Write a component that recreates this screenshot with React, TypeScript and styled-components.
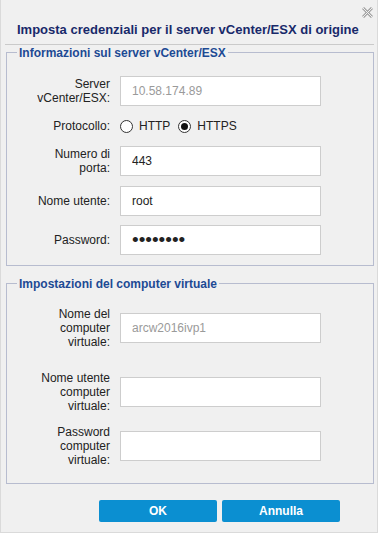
import React from "react";
import styled, { createGlobalStyle } from "styled-components";

const GlobalStyle = createGlobalStyle`
  body {
    margin: 0;
    background: #ffffff;
    font-family: "Liberation Sans", Arial, sans-serif;
  }
`;

const Dialog = styled.div`
  width: 378px;
  height: 533px;
  box-sizing: border-box;
  border: 1px solid #dadada;
  border-top: none;
  background: #f0f0f0;
  display: flex;
  flex-direction: column;
`;

const CloseRow = styled.div`
  display: flex;
  justify-content: flex-end;
  padding: 7px 4px 0 0;
  height: 12px;
`;

const CloseButton = styled.button`
  width: 11px;
  height: 11px;
  padding: 0;
  border: none;
  background: none;
  cursor: pointer;
  display: flex;
`;

const Title = styled.div`
  margin-top: 3px;
  padding-left: 16px;
  font-size: 13px;
  font-weight: bold;
  line-height: 16px;
  color: #18296a;
`;

const Separator = styled.div`
  margin: 6px 3px 0 4px;
  height: 1px;
  background: #cacaca;
`;

const Group = styled.fieldset<{ top: number; bottom: number; offset: number }>`
  margin: ${({ offset }) => offset}px 3px 0 5px;
  padding: ${({ top }) => top}px 0 ${({ bottom }) => bottom}px 0;
  border: 1px solid #b7bccf;
  min-width: 0;
`;

const Legend = styled.legend`
  margin-left: 10px;
  padding: 2px 2px 0;
  font-size: 12px;
  font-weight: bold;
  line-height: 14px;
  color: #1d4a94;
`;

const Row = styled.div<{ space?: number }>`
  display: grid;
  grid-template-columns: 103px 201px;
  column-gap: 10px;
  align-items: center;
  margin-top: ${({ space }) => space ?? 0}px;
`;

const Label = styled.label`
  text-align: right;
  font-size: 12px;
  line-height: 14px;
  color: #222222;
`;

const TextInput = styled.input<{ big?: boolean }>`
  box-sizing: border-box;
  width: 201px;
  height: 30px;
  padding: 0 11px;
  border: 1px solid #cdcdcd;
  background: #ffffff;
  font-family: "Liberation Sans", Arial, sans-serif;
  font-size: ${({ big }) => (big ? "19px" : "12px")};
  color: #222222;
  outline: none;

  &:disabled {
    color: #9a9a9a;
  }
`;

const RadioGroup = styled.div`
  display: flex;
  align-items: center;
  height: 20px;
`;

const RadioOption = styled.label`
  display: flex;
  align-items: center;
  gap: 6px;
  margin-right: 8px;
  font-size: 12px;
  color: #222222;
  cursor: pointer;
`;

const RadioDot = styled.span<{ checked: boolean }>`
  width: 13px;
  height: 13px;
  box-sizing: border-box;
  border: 1px solid #333333;
  border-radius: 50%;
  background: #ffffff;
  display: flex;
  align-items: center;
  justify-content: center;

  &::after {
    content: "";
    width: 7px;
    height: 7px;
    border-radius: 50%;
    background: ${({ checked }) => (checked ? "#111111" : "transparent")};
  }
`;

const Footer = styled.div`
  display: flex;
  justify-content: flex-end;
  gap: 5px;
  margin-top: 16px;
  padding-right: 37px;
`;

const Button = styled.button`
  width: 118px;
  height: 22px;
  border: none;
  border-radius: 2px;
  background: #0b8fd1;
  color: #ffffff;
  font-family: "Liberation Sans", Arial, sans-serif;
  font-size: 12px;
  font-weight: bold;
  cursor: pointer;
`;

const CloseIcon = () => (
  <svg width="11" height="11" viewBox="0 0 11 11">
    <line x1="1" y1="1" x2="10" y2="10" stroke="#a3a3a3" strokeWidth="3" />
    <line x1="10" y1="1" x2="1" y2="10" stroke="#a3a3a3" strokeWidth="3" />
    <line x1="1" y1="1" x2="10" y2="10" stroke="#f0f0f0" strokeWidth="1" />
    <line x1="10" y1="1" x2="1" y2="10" stroke="#f0f0f0" strokeWidth="1" />
  </svg>
);

const App = () => {
  const [protocol, setProtocol] = React.useState("HTTPS");

  return (
    <>
      <GlobalStyle />
      <Dialog>
        <CloseRow>
          <CloseButton aria-label="Chiudi">
            <CloseIcon />
          </CloseButton>
        </CloseRow>
        <Title>Imposta credenziali per il server vCenter/ESX di origine</Title>
        <Separator />

        <Group offset={-1} top={16} bottom={10}>
          <Legend>Informazioni sul server vCenter/ESX</Legend>
          <Row>
            <Label>
              Server
              <br />
              vCenter/ESX:
            </Label>
            <TextInput disabled value="10.58.174.89" readOnly />
          </Row>
          <Row space={10}>
            <Label>Protocollo:</Label>
            <RadioGroup>
              {["HTTP", "HTTPS"].map((p) => (
                <RadioOption key={p} onClick={() => setProtocol(p)}>
                  <RadioDot checked={protocol === p} />
                  {p}
                </RadioOption>
              ))}
            </RadioGroup>
          </Row>
          <Row space={10}>
            <Label>
              Numero di
              <br />
              porta:
            </Label>
            <TextInput defaultValue="443" />
          </Row>
          <Row space={10}>
            <Label>Nome utente:</Label>
            <TextInput defaultValue="root" />
          </Row>
          <Row space={9}>
            <Label>Password:</Label>
            <TextInput big type="password" defaultValue="password" />
          </Row>
        </Group>

        <Group offset={9} top={16} bottom={16}>
          <Legend>Impostazioni del computer virtuale</Legend>
          <Row>
            <Label>
              Nome del
              <br />
              computer
              <br />
              virtuale:
            </Label>
            <TextInput disabled value="arcw2016ivp1" readOnly />
          </Row>
          <Row space={22}>
            <Label>
              Nome utente
              <br />
              computer
              <br />
              virtuale:
            </Label>
            <TextInput />
          </Row>
          <Row space={12}>
            <Label>
              Password
              <br />
              computer
              <br />
              virtuale:
            </Label>
            <TextInput type="password" />
          </Row>
        </Group>

        <Footer>
          <Button>OK</Button>
          <Button>Annulla</Button>
        </Footer>
      </Dialog>
    </>
  );
};

export default App;
